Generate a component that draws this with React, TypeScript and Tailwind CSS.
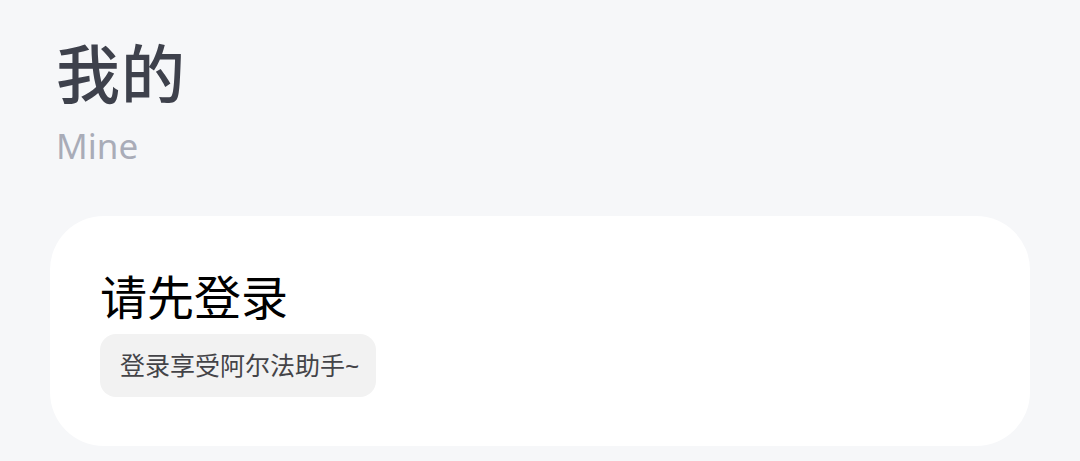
import React from "react";

export default function App() {
  return (
    <div className="w-[1080px] h-[461px] bg-[#f6f7f9] overflow-hidden" style={{ fontFamily: '"Noto Sans", "Noto Sans CJK SC", sans-serif' }}>
      <div className="pl-[56px] pt-[42px]">
        <div className="text-[64px] leading-none font-medium text-[#3e414c] tracking-[1px]">我的</div>
        <div className="mt-[22px] text-[35px] leading-none text-[#a9acb8]">Mine</div>
      </div>
      <div className="mx-[50px] mt-[53px] h-[230px] rounded-[54px] bg-white pl-[50px] pt-[58px]">
        <div className="text-[47px] leading-none text-black">请先登录</div>
        <div className="mt-[13px] inline-flex h-[63px] items-center rounded-[16px] bg-[#f2f2f2] pl-[20px] pr-[17px] text-[25px] text-[#444448]">
          登录享受阿尔法助手~
        </div>
      </div>
    </div>
  );
}
